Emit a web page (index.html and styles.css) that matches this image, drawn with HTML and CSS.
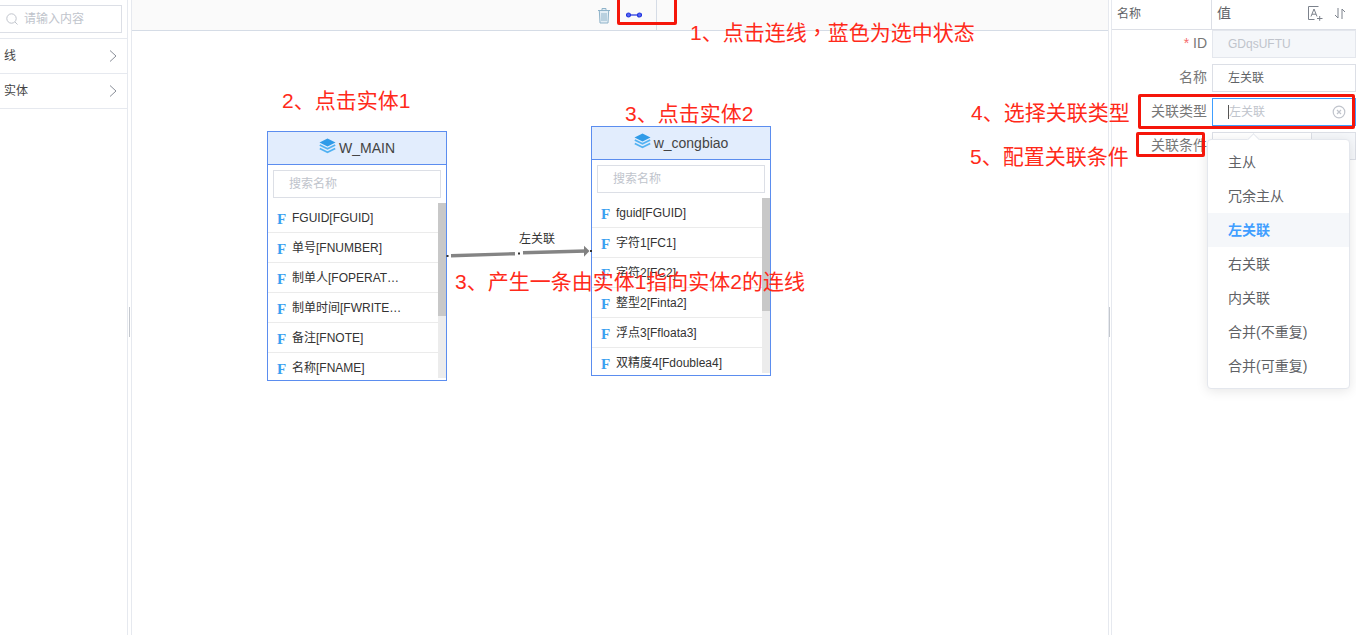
FILE: index.html
```html
<!DOCTYPE html>
<html lang="en">
<head>
<meta charset="UTF-8" />
<meta name="viewport" content="width=device-width, initial-scale=1" />
<title>实体关联配置</title>
<link rel="stylesheet" href="styles.css">
</head>
<body>

<div class="layout">
  <div class="sidebar">
    <div class="side-search">
      <svg class="side-search-icon" width="14" height="14" viewBox="0 0 14 14"><circle cx="6.500" cy="6.500" r="4.700" fill="none" stroke="#c0c4cc" stroke-width="1"/><path d="M10 10l2.500 2.500" stroke="#c0c4cc" fill="none"/></svg>
      <span>请输入内容</span>
    </div>
    <div class="side-item"><span>线</span><svg width="8" height="14" viewBox="0 0 8 14"><path d="M1 1.500l6 5.500-6 5.500" fill="none" stroke="#8a8f99"/></svg></div>
    <div class="side-item"><span>实体</span><svg width="8" height="14" viewBox="0 0 8 14"><path d="M1 1.500l6 5.500-6 5.500" fill="none" stroke="#8a8f99"/></svg></div>
  </div>

  <div class="splitter"><i></i></div>

  <div class="center">
    <div class="toolbar">
      <svg class="tool-trash" width="14" height="17" viewBox="0 0 14 17"><path d="M1 3.500h12M5 3.500V1.500h4v2M2.300 3.500l.7 12.500h8l.7-12.500" fill="#e3eef5" stroke="#8fb3c9"/><path d="M5 6v8M7 6v8M9 6v8" stroke="#8fb3c9" fill="none"/></svg>
      <div class="tool-link">
        <svg width="16" height="6" viewBox="0 0 16 6"><path d="M2 3h12" stroke="#2f3fe0" stroke-width="1.300"/><circle cx="2.500" cy="3" r="2" fill="#5a68f0" stroke="#2236e0" stroke-width="1.200"/><circle cx="13.500" cy="3" r="2" fill="#5a68f0" stroke="#2236e0" stroke-width="1.200"/></svg>
      </div>
      <div class="tool-rest"></div>
    </div>

    <div class="canvas">
      <div class="entity entity-main">
        <div class="entity-head">
          <svg width="17" height="16" viewBox="0 0 17 16"><path d="M8.500 .500l8 4-8 4-8-4z" fill="#2f9be8"/><path d="M.800 7l7.700 3.800L16.200 7M.800 10.500l7.700 3.800 7.700-3.800" fill="none" stroke="#52b2f2" stroke-width="1.800"/></svg>
          <span>W_MAIN</span>
        </div>
        <div class="entity-search">搜索名称</div>
        <div class="entity-body">
          <div class="entity-rows">
            <div class="entity-row"><b>F</b><span>FGUID[FGUID]</span></div>
            <div class="entity-row"><b>F</b><span>单号[FNUMBER]</span></div>
            <div class="entity-row"><b>F</b><span>制单人[FOPERAT…</span></div>
            <div class="entity-row"><b>F</b><span>制单时间[FWRITE…</span></div>
            <div class="entity-row"><b>F</b><span>备注[FNOTE]</span></div>
            <div class="entity-row"><b>F</b><span>名称[FNAME]</span></div>
          </div>
          <div class="scroll"><i></i></div>
        </div>
      </div>

      <div class="entity entity-sub">
        <div class="entity-head">
          <svg width="17" height="16" viewBox="0 0 17 16"><path d="M8.500 .500l8 4-8 4-8-4z" fill="#2f9be8"/><path d="M.800 7l7.700 3.800L16.200 7M.800 10.500l7.700 3.800 7.700-3.800" fill="none" stroke="#52b2f2" stroke-width="1.800"/></svg>
          <span>w_congbiao</span>
        </div>
        <div class="entity-search">搜索名称</div>
        <div class="entity-body">
          <div class="entity-rows">
            <div class="entity-row"><b>F</b><span>fguid[FGUID]</span></div>
            <div class="entity-row"><b>F</b><span>字符1[FC1]</span></div>
            <div class="entity-row"><b>F</b><span>字符2[FC2]</span></div>
            <div class="entity-row"><b>F</b><span>整型2[Finta2]</span></div>
            <div class="entity-row"><b>F</b><span>浮点3[Ffloata3]</span></div>
            <div class="entity-row"><b>F</b><span>双精度4[Fdoublea4]</span></div>
          </div>
          <div class="scroll"><i></i></div>
        </div>
      </div>

      <svg class="link-line" width="160" height="20" viewBox="0 0 160 20">
        <path d="M7 15.700L71 13.700M79 12.700L142 11" stroke="#848484" stroke-width="3.400" fill="none"/>
        <path d="M140 5.700l5.500 5.300-5.500 5.700z" fill="#808080"/>
        <rect x="2.500" y="15" width="2" height="2" fill="#333"/>
        <rect x="74" y="12.500" width="2" height="2" fill="#333"/>
        <rect x="146" y="10" width="2" height="2" fill="#333"/>
      </svg>
      <div class="link-label">左关联</div>
    </div>
  </div>

  <div class="splitter splitter-right"><i></i></div>

  <div class="props">
    <div class="props-head">
      <div class="props-name">名称</div>
      <div class="props-value">
        <span>值</span>
        <svg width="15" height="15" viewBox="0 0 15 15"><path d="M10.500 .500H.500v13h6" fill="none" stroke="#7c828c"/><path d="M3 10.500L6 3l3 7.500M4 8.200h4" fill="none" stroke="#7c828c"/><path d="M9 12.500h5.500M11.700 10v4.800" stroke="#7c828c" fill="none"/></svg>
        <svg width="12" height="13" viewBox="0 0 12 13"><path d="M4 1v10L1 8M8 12V2l3 3" fill="none" stroke="#7c828c"/></svg>
      </div>
    </div>
    <div class="prop-row">
      <label><em>*</em> ID</label>
      <div class="prop-input prop-disabled">GDqsUFTU</div>
    </div>
    <div class="prop-row">
      <label>名称</label>
      <div class="prop-input">左关联</div>
    </div>
    <div class="prop-row">
      <label>关联类型</label>
      <div class="prop-input prop-focus">
        <span class="caret"></span><span>左关联</span>
        <svg width="14" height="14" viewBox="0 0 14 14"><circle cx="7" cy="7" r="5.800" fill="none" stroke="#c0c4cc" stroke-width="1.200"/><path d="M5 5l4 4M9 5l-4 4" stroke="#c0c4cc" stroke-width="1.200"/></svg>
      </div>
    </div>
    <div class="prop-row">
      <label>关联条件</label>
      <div class="prop-split"><div></div><div></div></div>
    </div>

    <div class="dropdown">
      <span class="dropdown-arrow"></span>
      <div class="dropdown-item">主从</div>
      <div class="dropdown-item">冗余主从</div>
      <div class="dropdown-item selected">左关联</div>
      <div class="dropdown-item">右关联</div>
      <div class="dropdown-item">内关联</div>
      <div class="dropdown-item">合并(不重复)</div>
      <div class="dropdown-item">合并(可重复)</div>
    </div>
  </div>
</div>

<!-- red notes drawn over the screenshot -->
<div class="note note-1">1、点击连线<span class="comma">，</span>蓝色为选中状态</div>
<div class="note note-2">2、点击实体1</div>
<div class="note note-3">3、点击实体2</div>
<div class="note note-line">3、产生一条由实体1指向实体2的连线</div>
<div class="note note-4">4、选择关联类型</div>
<div class="note note-5">5、配置关联条件</div>
<div class="mark mark-link"></div>
<div class="mark mark-type"></div>
<div class="mark mark-cond"></div>

</body>
</html>
```

FILE: styles.css
```css
* {
  box-sizing: border-box;
}
html, body {
  margin: 0;
  padding: 0;
  height: 100%;
  overflow: hidden;
}
body {
  font-family: "Liberation Sans", "Noto Sans CJK SC", sans-serif;
  font-size: 12px;
  line-height: 16px;
  color: #333;
  background: white;
  position: relative;
}
.layout {
  display: flex;
  height: 635px;
}

/* left list */
.sidebar {
  width: 128px;
  flex-shrink: 0;
  border-right: 1px solid #e6e9ef;
}
.side-search {
  display: flex;
  align-items: center;
  gap: 5px;
  width: 122px;
  height: 28px;
  margin: 5px 0 5px;
  padding: 0 0 1px 5px;
  border: 1px solid #dcdfe6;
  border-left: none;
  color: #c0c4cc;
}
.side-search-icon {
  flex-shrink: 0;
}
.side-item {
  display: flex;
  align-items: center;
  justify-content: space-between;
  height: 35px;
  padding: 0 10px 0 4px;
  border-top: 1px solid #e6e9ef;
  color: #444;
}
.side-item:last-child {
  border-bottom: 1px solid #e6e9ef;
  height: 36px;
}

.splitter {
  width: 4px;
  flex-shrink: 0;
  padding: 307px 0 0 1px;
  border-right: 1px solid #e6e9ef;
}
.splitter i {
  display: block;
  width: 1px;
  height: 30px;
  background: #c4c8ce;
}
.splitter-right {
  border-left: 1px solid #e6e9ef;
  border-right: 1px solid #e6e9ef;
  padding-left: 0;
}

/* center */
.center {
  flex: 1;
  min-width: 0;
  display: flex;
  flex-direction: column;
}
.toolbar {
  height: 31px;
  flex-shrink: 0;
  display: flex;
  align-items: flex-start;
  padding-left: 465px;
  background: #fafafa;
  border-bottom: 1px solid #d5dce6;
}
.tool-trash {
  margin: 7px 0 0 0;
}
.tool-link {
  width: 39px;
  height: 30px;
  margin-left: 7px;
  padding: 12px 0 0 8px;
  border-right: 1px solid #d5dce6;
}
.tool-link svg {
  display: block;
}
.canvas {
  flex: 1;
  position: relative;
}

/* entities are placed freely on the canvas */
.entity {
  position: absolute;
  width: 180px;
  height: 250px;
  border: 1px solid #5b8def;
  background: white;
}
.entity-main {
  left: 135px;
  top: 100px;
}
.entity-sub {
  left: 459px;
  top: 95px;
}
.entity-head {
  height: 33px;
  display: flex;
  align-items: center;
  justify-content: center;
  gap: 3px;
  padding-bottom: 1px;
  background: #e2edfd;
  border-bottom: 1px solid #5b8def;
  font-size: 14px;
  color: #444;
}
.entity-head svg {
  margin-top: -4px;
}
.entity-search {
  height: 28px;
  margin: 5px 5px 5px;
  padding-left: 15px;
  line-height: 26px;
  border: 1px solid #dcdfe6;
  color: #c0c4cc;
}
.entity-body {
  display: flex;
  height: 175px;
  overflow: hidden;
}
.entity-rows {
  flex: 1;
  min-width: 0;
}
.entity-row {
  height: 30px;
  display: flex;
  align-items: center;
  padding-left: 9px;
  border-bottom: 1px solid #ebebeb;
  color: #333;
}
.entity-row b {
  width: 15px;
  font-family: "Liberation Serif", serif;
  font-size: 15px;
  color: #3aa0f0;
  margin-top: 2px;
}
.scroll {
  width: 8px;
  background: #ececec;
}
.scroll i {
  display: block;
  height: 113px;
  background: #c8c8c8;
}
.link-line {
  position: absolute;
  left: 312px;
  top: 209px;
}
.link-label {
  position: absolute;
  left: 387px;
  top: 200px;
  color: #333;
}

/* right property panel */
.props {
  width: 244px;
  flex-shrink: 0;
  position: relative;
  color: #606266;
}
.props-head {
  display: flex;
  height: 30px;
  border-bottom: 1px solid #dcdfe6;
}
.props-name {
  width: 100px;
  padding-left: 5px;
  line-height: 28px;
  border-right: 1px solid #dcdfe6;
}
.props-value {
  flex: 1;
  display: flex;
  align-items: center;
  gap: 11px;
  padding: 0 10px 3px 5px;
  font-size: 14px;
}
.props-value span {
  flex: 1;
}
.prop-row {
  display: flex;
  height: 34px;
  padding-bottom: 6px;
}
.prop-row label {
  width: 100px;
  padding-right: 5px;
  text-align: right;
  font-size: 14px;
  line-height: 26px;
  color: #777;
}
.prop-row em {
  color: #f56c6c;
  font-style: normal;
}
.prop-input {
  flex: 1;
  display: flex;
  align-items: center;
  padding: 0 0 1px 15px;
  border: 1px solid #dcdfe6;
  color: #606266;
}
.prop-disabled {
  background: #f5f7fa;
  border-color: #e4e7ed;
  color: #c0c4cc;
}
.prop-focus {
  border-color: #409eff;
  color: #c0c4cc;
  justify-content: flex-start;
  padding-right: 9px;
}
.prop-focus span:nth-child(2) {
  flex: 1;
}
.caret {
  width: 1px;
  height: 14px;
  background: #555;
}
.prop-split {
  flex: 1;
  display: flex;
}
.prop-split div {
  height: 28px;
  flex: 1;
  border: 1px solid #dcdfe6;
  background: #f5f7fa;
}
.prop-split div:first-child {
  flex: none;
  width: 99px;
  border-right: none;
  background: white;
}
.dropdown {
  position: absolute;
  left: 95px;
  top: 139px;
  width: 143px;
  height: 250px;
  padding: 5px 0;
  background: white;
  border: 1px solid #e4e7ed;
  border-radius: 4px;
  box-shadow: 0 2px 12px rgba(0, 0, 0, 0.1);
  z-index: 2;
}
.dropdown-arrow {
  position: absolute;
  left: 41px;
  top: -5px;
  width: 9px;
  height: 9px;
  background: white;
  border-left: 1px solid #e4e7ed;
  border-top: 1px solid #e4e7ed;
  transform: rotate(45deg);
}
.dropdown-item {
  height: 34px;
  line-height: 35px;
  padding-left: 20px;
  font-size: 14px;
  color: #606266;
}
.dropdown-item.selected {
  background: #f5f7fa;
  color: #409eff;
  font-weight: bold;
}

/* notes */
.note {
  position: absolute;
  color: #ff2a1a;
  font-size: 21px;
  line-height: 26px;
  white-space: nowrap;
  z-index: 5;
}
.comma {
  font-family: "Noto Sans CJK TC", sans-serif;
}
.note-1 { left: 690px; top: 18px; }
.note-2 { left: 282px; top: 88px; }
.note-3 { left: 625px; top: 101px; }
.note-line { left: 455px; top: 269px; }
.note-4 { left: 971px; top: 100px; }
.note-5 { left: 970px; top: 144px; }
.mark {
  position: absolute;
  border: 3px solid #f5160a;
  border-radius: 2px;
  z-index: 5;
}
.mark-link { left: 617px; top: -3px; width: 60px; height: 28px; }
.mark-type { left: 1138px; top: 94px; width: 217px; height: 35px; }
.mark-cond { left: 1136px; top: 132px; width: 69px; height: 25px; }
```
